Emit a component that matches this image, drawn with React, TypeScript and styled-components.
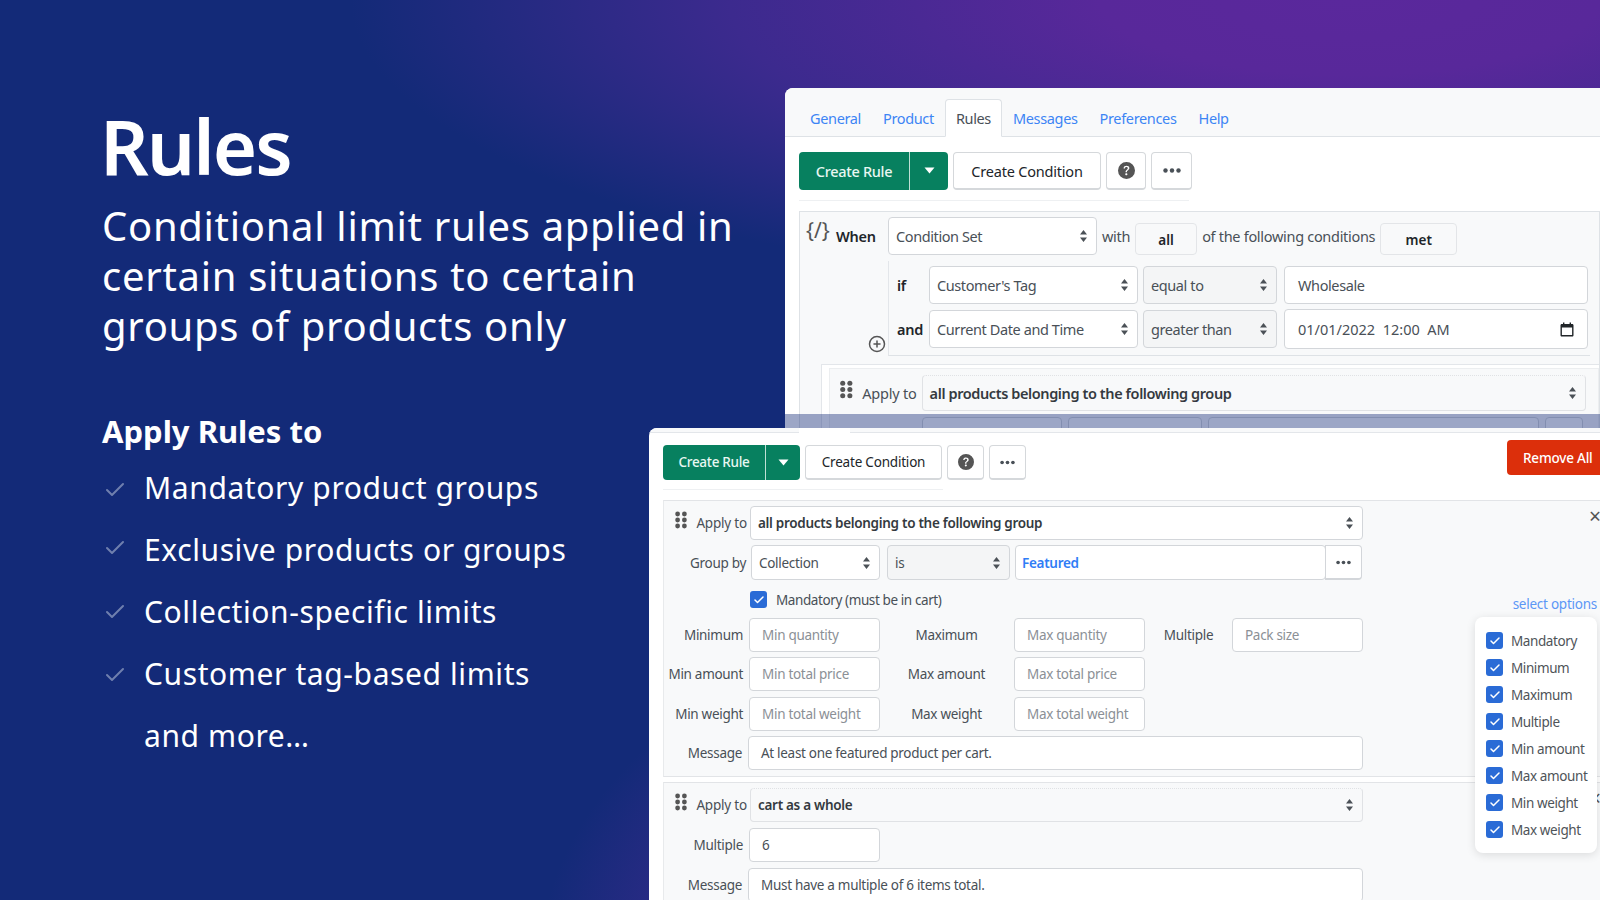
import styled, { createGlobalStyle } from "styled-components";
import { Check, CirclePlus } from "lucide-react";
import { BsQuestionCircleFill } from "react-icons/bs";

const GlobalStyle = createGlobalStyle`
  html, body {
    margin: 0;
    padding: 0;
    width: 1600px;
    height: 900px;
    overflow: hidden;
    background: #132a78;
  }
  * {
    box-sizing: border-box;
  }
`;

const Stage = styled.div`
  position: relative;
  width: 1600px;
  height: 900px;
  overflow: hidden;
  font-family: "Noto Sans", sans-serif;
  background:
    radial-gradient(ellipse 1000px 300px at 1350px 0, #5a289c 0%, #58289a 25%, #3c2a8e 62%, rgba(19, 42, 120, 0) 100%),
    radial-gradient(ellipse 760px 420px at 1300px 960px, #5f2ca3 0%, rgba(95, 44, 163, 0.6) 70%, rgba(19, 42, 120, 0) 100%),
    #132a78;
`;

const Copy = styled.section`
  width: 680px;
  padding: 101px 0 0 102px;
  color: #fff;
`;

const Title = styled.h1`
  margin: 0 0 0 -2px;
  font-size: 76px;
  line-height: 90px;
  font-weight: 600;
  letter-spacing: -2px;
`;

const Lead = styled.p`
  margin: 10px 0 0;
  width: 660px;
  font-size: 40px;
  line-height: 50px;
  font-weight: 400;
  letter-spacing: 0.7px;
`;

const SubTitle = styled.h2`
  margin: 60px 0 0;
  font-size: 31px;
  line-height: 40px;
  font-weight: 700;
  letter-spacing: 0;
`;

const Bullets = styled.ul`
  margin: 5px 0 0;
  padding: 0;
  list-style: none;
`;

const Bullet = styled.li`
  display: flex;
  align-items: center;
  height: 62px;
  font-size: 30px;
  font-weight: 400;
  letter-spacing: 0.6px;
  white-space: nowrap;
`;

const BulletMark = styled.span<{ $nudge?: number }>`
  display: flex;
  width: 42px;
  padding-left: 1px;
  margin-top: ${(p) => p.$nudge ?? 0}px;
  color: #6f7fae;
`;

const Panel = styled.div<{ $x: number; $y: number; $w: number; $h: number }>`
  position: absolute;
  left: ${(p) => p.$x}px;
  top: ${(p) => p.$y}px;
  width: ${(p) => p.$w}px;
  height: ${(p) => p.$h}px;
  background: #fff;
  border-radius: 8px 0 0 0;
  overflow: hidden;
  color: #212529;
`;

const Veil = styled.div`
  position: absolute;
  left: 0;
  right: 0;
  bottom: 0;
  height: 14px;
  background: rgba(19, 42, 120, 0.42);
`;

const TabBar = styled.nav`
  display: flex;
  align-items: flex-end;
  height: 49px;
  padding-left: 14px;
  background: #f8f9fa;
  border-bottom: 1px solid #dee2e6;
`;

const Tab = styled.a<{ $active?: boolean }>`
  height: 38px;
  padding: 0 10px;
  margin-bottom: -1px;
  font-size: 14.5px;
  line-height: 36px;
  letter-spacing: -0.35px;
  color: ${(p) => (p.$active ? "#495057" : "#3d85f5")};
  background: ${(p) => (p.$active ? "#fff" : "transparent")};
  border: 1px solid ${(p) => (p.$active ? "#dee2e6" : "transparent")};
  border-bottom-color: ${(p) => (p.$active ? "#fff" : "transparent")};
  border-radius: 4px 4px 0 0;
`;

const Toolbar = styled.div<{ $pad: string }>`
  display: flex;
  gap: 5px;
  padding: ${(p) => p.$pad};
`;

const SplitButton = styled.div`
  display: flex;
`;

const GreenButton = styled.button<{ $w: number; $h: number; $fs: number; $side: "left" | "right" }>`
  display: flex;
  align-items: center;
  justify-content: center;
  width: ${(p) => p.$w}px;
  height: ${(p) => p.$h}px;
  padding: 0 0 1px;
  border: 0;
  font-family: inherit;
  font-size: ${(p) => p.$fs}px;
  font-weight: 500;
  letter-spacing: -0.3px;
  color: #e9f7f2;
  background: #07805f;
  border-radius: ${(p) => (p.$side === "left" ? "4px 0 0 4px" : "0 4px 4px 0")};
  border-left: ${(p) => (p.$side === "right" ? "1px solid #bfe0d5" : "0")};
`;

const PlainButton = styled.button<{ $w: number; $h: number; $fs: number }>`
  display: flex;
  align-items: center;
  justify-content: center;
  width: ${(p) => p.$w}px;
  height: ${(p) => p.$h}px;
  padding: 0;
  font-family: inherit;
  font-size: ${(p) => p.$fs}px;
  letter-spacing: -0.2px;
  color: #212529;
  background: #fff;
  border: 1px solid #d5d8db;
  border-bottom-width: 2px;
  border-radius: 4px;
`;

const ToolbarRule = styled.div<{ $left: number; $top: number; $w: number }>`
  height: 1px;
  width: ${(p) => p.$w}px;
  margin: ${(p) => p.$top}px 0 0 ${(p) => p.$left}px;
  background: #eef0f2;
`;

const Box = styled.div`
  display: flex;
  align-items: center;
  min-width: 0;
  overflow: hidden;
  white-space: nowrap;
  background: #fff;
  border: 1px solid #d3d6da;
  border-radius: 4px;
`;

const Control = styled(Box)<{ $w?: number; $h: number; $fs: number; $pad?: number; $tone?: "white" | "grey" | "dotted"; $strong?: boolean; $color?: string }>`
  flex: none;
  justify-content: space-between;
  width: ${(p) => (p.$w ? `${p.$w}px` : "100%")};
  height: ${(p) => p.$h}px;
  padding: 0 ${(p) => p.$pad ?? 9}px 0 ${(p) => p.$pad ?? 7}px;
  font-size: ${(p) => p.$fs}px;
  letter-spacing: ${(p) => (p.$fs > 14 ? "-0.4px" : "-0.3px")};
  font-weight: ${(p) => (p.$strong ? 600 : 400)};
  color: ${(p) => p.$color ?? "#495057"};
  background: ${(p) => (p.$tone === "grey" ? "#f4f5f6" : p.$tone === "dotted" ? "#f8f9fa" : "#fff")};
  border-style: ${(p) => (p.$tone === "dotted" ? "dotted solid solid" : "solid")};
  border-color: ${(p) => (p.$tone === "dotted" ? "#e0e2e5" : "#d3d6da")};
`;

const DateText = styled.span`
  letter-spacing: 0;
`;

const RuleBox = styled.div`
  margin: 10px 0 0 14px;
  background: #f8f9fa;
  border: 1px solid #dee2e6;
  padding: 5px 0 0 6px;
  height: 300px;
`;

const WhenRow = styled.div`
  display: flex;
  align-items: flex-end;
  gap: 5px;
`;

const Braces = styled.span`
  width: 25px;
  align-self: flex-start;
  font-size: 21px;
  line-height: 26px;
  font-weight: 400;
  color: #555;
  white-space: nowrap;
`;

const StrongLabel = styled.span<{ $w?: number }>`
  flex: none;
  width: ${(p) => (p.$w ? `${p.$w}px` : "auto")};
  font-size: 14.5px;
  font-weight: 600;
  letter-spacing: -0.3px;
  color: #212529;
`;

const WhenLabel = styled(StrongLabel)`
  width: 47px;
  align-self: center;
`;

const InlineText = styled.span`
  align-self: center;
  font-size: 14.5px;
  letter-spacing: -0.3px;
  color: #495057;
  white-space: nowrap;
`;

const Pill = styled.div<{ $w: number }>`
  display: flex;
  align-items: center;
  justify-content: center;
  width: ${(p) => p.$w}px;
  height: 32px;
  padding-top: 1px;
  font-size: 13.5px;
  font-weight: 600;
  color: #212529;
  background: #f8f9fa;
  border: 1px solid #e3e5e8;
  border-radius: 4px;
`;

const ConditionBox = styled.div`
  position: relative;
  display: grid;
  grid-template-columns: 32px 209px 139px 311px;
  grid-auto-rows: 38px;
  row-gap: 6px;
  width: 702px;
  margin: 6px 0 0 82px;
  padding: 5px 0 7px 8px;
  border-left: 1px solid #e3e6ea;
  border-bottom: 1px solid #dee2e6;
  align-items: center;
`;

const AddCondition = styled.span`
  position: absolute;
  left: -21px;
  bottom: 2px;
  display: flex;
  color: #555;
`;

const WithGap = styled.div<{ $left: number }>`
  padding-left: ${(p) => p.$left}px;
`;

const OuterGroup = styled.div`
  margin: 8px 0 0 15px;
  padding: 3px 0 0 7px;
  background: #fff;
  border: 1px solid #e3e6ea;
  border-right: 0;
  height: 100px;
`;

const InnerGroup = styled.div`
  padding: 6px 0 0 10px;
  background: #f8f9fa;
  border: 1px solid #eceef0;
  height: 90px;
`;

const ApplyBack = styled.div`
  display: flex;
  align-items: flex-start;
`;

const Grip = styled.svg`
  flex: none;
  display: block;
  margin-top: 5px;
  fill: #555;
`;

const ApplyLabel = styled.span<{ $w: number; $fs: number; $lh: number }>`
  flex: none;
  width: ${(p) => p.$w}px;
  text-align: right;
  font-size: ${(p) => p.$fs}px;
  line-height: ${(p) => p.$lh}px;
  letter-spacing: -0.2px;
  color: #495057;
  white-space: nowrap;
`;

const BackSecondRow = styled.div`
  display: grid;
  grid-template-columns: 140px 134px 331px 38px;
  gap: 0 6px;
  margin: 6px 0 0 82px;
`;

const ClippedControl = styled.div`
  height: 38px;
  background: #fff;
  border: 1px solid #d3d6da;
  border-radius: 4px;
`;

const FrontStrip = styled.div`
  height: 5px;
  padding-left: 150px;
  background: #f8f9fa;
  border-bottom: 1px solid #e3e6ea;
`;

const FrontTabEnd = styled.div`
  width: 51px;
  height: 5px;
  background: #fff;
`;

const FrontToolbar = styled.div`
  display: flex;
  justify-content: space-between;
`;

const RemoveAll = styled.button`
  flex: none;
  width: 105px;
  height: 35px;
  margin: 7px -12px 0 0;
  padding: 0 0 0 16px;
  text-align: left;
  font-family: inherit;
  font-size: 13.5px;
  font-weight: 500;
  letter-spacing: -0.2px;
  color: #fff;
  background: #dc2f0b;
  border: 0;
  border-radius: 4px 0 0 4px;
`;

const Group = styled.div<{ $top: number; $h: number }>`
  display: flex;
  justify-content: space-between;
  height: ${(p) => p.$h}px;
  margin: ${(p) => p.$top}px 0 0 14px;
  background: #f8f9fa;
  border-top: 1px solid #e2e4e7;
  border-left: 1px solid #e8eaec;
  border-bottom: 1px solid #e2e4e7;
`;

const Form = styled.div`
  flex: none;
  width: 699px;
  padding-top: 5px;
`;

const Side = styled.div`
  display: flex;
  flex-direction: column;
  align-items: flex-end;
  margin-right: -1px;
  font-size: 14px;
`;

const CloseMark = styled.span<{ $top: number }>`
  margin: ${(p) => p.$top}px 0 0;
  font-size: 21px;
  line-height: 17px;
  color: #555;
`;

const SelectOptions = styled.a`
  margin: 70px 4px 0 0;
  font-size: 13.5px;
  letter-spacing: -0.25px;
  color: #5c97f6;
`;

const Row = styled.div<{ $top?: number; $label: number; $gap: number }>`
  display: grid;
  grid-template-columns: ${(p) => p.$label}px 1fr;
  column-gap: ${(p) => p.$gap}px;
  align-items: center;
  margin-top: ${(p) => p.$top ?? 0}px;
`;

const ApplyRow = styled.div<{ $top?: number }>`
  display: flex;
  align-items: flex-start;
  margin-top: ${(p) => p.$top ?? 0}px;
  padding-left: 11px;
`;

const FieldLabel = styled.span<{ $center?: boolean }>`
  font-size: 13.5px;
  letter-spacing: -0.3px;
  color: #495057;
  text-align: ${(p) => (p.$center ? "center" : "right")};
  white-space: nowrap;
`;

const GroupByFields = styled.div`
  display: grid;
  grid-template-columns: 129px 123px 1fr;
  column-gap: 7px;
`;

const FeaturedField = styled.div`
  display: flex;
  margin-left: -2px;
`;

const DotsAddon = styled.div`
  flex: none;
  display: flex;
  align-items: center;
  justify-content: center;
  width: 37px;
  height: 35px;
  margin-left: -1px;
  background: #fff;
  border: 1px solid #d3d6da;
  border-bottom-width: 2px;
  border-radius: 0 4px 4px 0;
`;

const MandatoryRow = styled.label`
  display: flex;
  align-items: center;
  gap: 9px;
  height: 38px;
  padding: 2px 0 1px 86px;
  font-size: 13.5px;
  letter-spacing: -0.4px;
  color: #495057;
`;

const Tick = styled.span`
  flex: none;
  display: flex;
  align-items: center;
  justify-content: center;
  width: 17px;
  height: 17px;
  color: #fff;
  background: #2a6bd6;
  border-radius: 3px;
`;

const LimitsRow = styled.div<{ $top?: number }>`
  display: grid;
  grid-template-columns: 79px 136px 135px 131px 87px 131px;
  align-items: center;
  margin-top: ${(p) => p.$top ?? 0}px;
`;

const LimitField = styled.div`
  margin-left: 6px;
  width: 131px;
`;

const OptionsPopup = styled.div`
  position: absolute;
  left: 826px;
  top: 189px;
  width: 122px;
  height: 236px;
  padding: 10px 0 0 11px;
  background: #fff;
  border-radius: 8px;
  box-shadow: 0 2px 10px rgba(0, 0, 0, 0.12);
`;

const OptionRow = styled.div`
  display: flex;
  align-items: center;
  gap: 8px;
  height: 27px;
  font-size: 13.5px;
  letter-spacing: -0.4px;
  color: #4f5459;
  white-space: nowrap;
`;

const Arrows = () => (
  <svg width="7" height="14" viewBox="0 0 7 14" style={{ flex: "none" }}>
    <path d="M3.5 1 L7 5.6 H0 Z M3.5 13 L0 8.4 H7 Z" fill="#4b5157" />
  </svg>
);

const Caret = () => (
  <svg width="11" height="7" viewBox="0 0 11 7">
    <path d="M0.5 0.5 H10.5 L5.5 6.5 Z" fill="#fff" />
  </svg>
);

const Dots = ({ width = 18 }: { width?: number }) => (
  <svg width={width} height="5" viewBox="0 0 18 5">
    <circle cx="2.5" cy="2.5" r="2.2" fill="#495057" />
    <circle cx="9" cy="2.5" r="2.2" fill="#495057" />
    <circle cx="15.5" cy="2.5" r="2.2" fill="#495057" />
  </svg>
);

const GripIcon = ({ scale = 1 }: { scale?: number }) => (
  <Grip width={12 * scale} height={18 * scale} viewBox="0 0 12 18">
    {[3, 9, 15].map((y) => (
      <g key={y}>
        <circle cx="2.6" cy={y} r="2.4" />
        <circle cx="9.4" cy={y} r="2.4" />
      </g>
    ))}
  </Grip>
);

const CalendarIcon = () => (
  <svg width="14" height="15" viewBox="0 0 14 15">
    <path
      d="M3 0.5V2H1.8C1 2 0.5 2.6 0.5 3.3V13.2C0.5 14 1 14.5 1.8 14.5H12.2C13 14.5 13.5 14 13.5 13.2V3.3C13.5 2.6 13 2 12.2 2H11V0.5H9.6V2H4.4V0.5ZM1.9 5.5H12.1V13.1H1.9Z"
      fill="#212529"
      fillRule="evenodd"
    />
  </svg>
);

const limits = [
  { top: 0, a: "Minimum", ap: "Min quantity", b: "Maximum", bp: "Max quantity", c: "Multiple", cp: "Pack size" },
  { top: 5, a: "Min amount", ap: "Min total price", b: "Max amount", bp: "Max total price" },
  { top: 6, a: "Min weight", ap: "Min total weight", b: "Max weight", bp: "Max total weight" },
];

const options = ["Mandatory", "Minimum", "Maximum", "Multiple", "Min amount", "Max amount", "Min weight", "Max weight"];

const bullets = [
  { text: "Mandatory product groups", nudge: 6 },
  { text: "Exclusive products or groups", nudge: -2 },
  { text: "Collection-specific limits", nudge: 2 },
  { text: "Customer tag-based limits", nudge: 3 },
];

const tabs = ["General", "Product", "Rules", "Messages", "Preferences", "Help"];

const BackPanel = () => (
  <Panel $x={785} $y={88} $w={815} $h={340}>
    <TabBar>
      {tabs.map((t) => (
        <Tab key={t} $active={t === "Rules"}>
          {t}
        </Tab>
      ))}
    </TabBar>
    <Toolbar $pad="15px 14px 0">
      <SplitButton>
        <GreenButton $w={110} $h={38} $fs={14.5} $side="left">Create Rule</GreenButton>
        <GreenButton $w={39} $h={38} $fs={14.5} $side="right"><Caret /></GreenButton>
      </SplitButton>
      <PlainButton $w={148} $h={38} $fs={14.5}>Create Condition</PlainButton>
      <PlainButton $w={40} $h={38} $fs={14.5}><BsQuestionCircleFill size={17} color="#555" /></PlainButton>
      <PlainButton $w={41} $h={38} $fs={14.5}><Dots /></PlainButton>
    </Toolbar>
    <ToolbarRule $left={14} $top={10} $w={390} />
    <RuleBox>
      <WhenRow>
        <Braces>{"{/}"}</Braces>
        <WhenLabel>When</WhenLabel>
        <Control $w={209} $h={38} $fs={14.5}>Condition Set<Arrows /></Control>
        <InlineText>with</InlineText>
        <Pill $w={62}>all</Pill>
        <InlineText>of the following conditions</InlineText>
        <Pill $w={77}>met</Pill>
      </WhenRow>
      <ConditionBox>
        <AddCondition><CirclePlus size={18} strokeWidth={2} /></AddCondition>
        <StrongLabel>if</StrongLabel>
        <Control $w={209} $h={38} $fs={14.5}>Customer's Tag<Arrows /></Control>
        <WithGap $left={5}><Control $w={134} $h={38} $fs={14.5} $tone="grey">equal to<Arrows /></Control></WithGap>
        <WithGap $left={7}><Control $w={304} $h={38} $fs={14.5} $pad={13}>Wholesale</Control></WithGap>
        <StrongLabel>and</StrongLabel>
        <Control $w={209} $h={38} $fs={14.5}>Current Date and Time<Arrows /></Control>
        <WithGap $left={5}><Control $w={134} $h={38} $fs={14.5} $tone="grey">greater than<Arrows /></Control></WithGap>
        <WithGap $left={7}><Control $w={304} $h={40} $fs={14.5} $pad={13}><DateText>01/01/2022&nbsp; 12:00&nbsp; AM</DateText><CalendarIcon /></Control></WithGap>
      </ConditionBox>
      <OuterGroup>
        <InnerGroup>
          <ApplyBack>
            <GripIcon scale={1.05} />
            <ApplyLabel $w={64} $fs={14.5} $lh={36}>Apply to</ApplyLabel>
            <WithGap $left={5}>
              <Control $w={664} $h={36} $fs={14.5} $tone="dotted" $strong $color="#343a40">
                all products belonging to the following group<Arrows />
              </Control>
            </WithGap>
          </ApplyBack>
          <BackSecondRow>
            <ClippedControl />
            <ClippedControl />
            <ClippedControl />
            <ClippedControl />
          </BackSecondRow>
        </InnerGroup>
      </OuterGroup>
    </RuleBox>
    <Veil />
  </Panel>
);

const FrontPanel = () => (
  <Panel $x={649} $y={428} $w={951} $h={472}>
    <FrontStrip><FrontTabEnd /></FrontStrip>
    <FrontToolbar>
      <Toolbar $pad="12px 0 0 14px">
        <SplitButton>
          <GreenButton $w={102} $h={35} $fs={13.5} $side="left">Create Rule</GreenButton>
          <GreenButton $w={35} $h={35} $fs={13.5} $side="right"><Caret /></GreenButton>
        </SplitButton>
        <PlainButton $w={137} $h={35} $fs={13.5}>Create Condition</PlainButton>
        <PlainButton $w={37} $h={35} $fs={13.5}><BsQuestionCircleFill size={16} color="#555" /></PlainButton>
        <PlainButton $w={37} $h={35} $fs={13.5}><Dots width={15} /></PlainButton>
      </Toolbar>
      <RemoveAll>Remove All</RemoveAll>
    </FrontToolbar>
    <ToolbarRule $left={14} $top={9} $w={280} />
    <Group $top={10} $h={277}>
      <Form>
        <ApplyRow>
          <GripIcon />
          <ApplyLabel $w={60} $fs={13.5} $lh={34}>Apply to</ApplyLabel>
          <WithGap $left={3}>
            <Control $w={613} $h={34} $fs={13.5} $strong $color="#343a40">
              all products belonging to the following group<Arrows />
            </Control>
          </WithGap>
        </ApplyRow>
        <Row $top={5} $label={82} $gap={5}>
          <FieldLabel>Group by</FieldLabel>
          <GroupByFields>
            <Control $w={129} $h={35} $fs={13.5}>Collection<Arrows /></Control>
            <Control $w={123} $h={35} $fs={13.5} $tone="grey">is<Arrows /></Control>
            <FeaturedField>
              <Control $w={311} $h={35} $fs={13.5} $pad={6} $strong $color="#2f7df6">Featured</Control>
              <DotsAddon><Dots width={15} /></DotsAddon>
            </FeaturedField>
          </GroupByFields>
        </Row>
        <MandatoryRow>
          <Tick><Check size={12} strokeWidth={3} /></Tick>
          Mandatory (must be in cart)
        </MandatoryRow>
        {limits.map((r) => (
          <LimitsRow key={r.a} $top={r.top}>
            <FieldLabel>{r.a}</FieldLabel>
            <LimitField>
              <Control $w={131} $h={34} $fs={13.5} $pad={12} $color="#8b9096">{r.ap}</Control>
            </LimitField>
            <FieldLabel $center>{r.b}</FieldLabel>
            <Control $w={131} $h={34} $fs={13.5} $pad={12} $color="#8b9096">{r.bp}</Control>
            {r.c ? <FieldLabel $center>{r.c}</FieldLabel> : <span />}
            {r.cp ? <Control $w={131} $h={34} $fs={13.5} $pad={12} $color="#8b9096">{r.cp}</Control> : <span />}
          </LimitsRow>
        ))}
        <Row $top={5} $label={78} $gap={6}>
          <FieldLabel>Message</FieldLabel>
          <Control $w={615} $h={34} $fs={13.5} $pad={12}>At least one featured product per cart.</Control>
        </Row>
      </Form>
      <Side>
        <CloseMark $top={7}>×</CloseMark>
        <SelectOptions>select options</SelectOptions>
      </Side>
    </Group>
    <Group $top={5} $h={130}>
      <Form>
        <ApplyRow>
          <GripIcon />
          <ApplyLabel $w={60} $fs={13.5} $lh={34}>Apply to</ApplyLabel>
          <WithGap $left={3}>
            <Control $w={613} $h={34} $fs={13.5} $tone="dotted" $strong $color="#343a40">
              cart as a whole<Arrows />
            </Control>
          </WithGap>
        </ApplyRow>
        <Row $top={6} $label={79} $gap={6}>
          <FieldLabel>Multiple</FieldLabel>
          <Control $w={131} $h={34} $fs={13.5} $pad={12}>6</Control>
        </Row>
        <Row $top={6} $label={78} $gap={6}>
          <FieldLabel>Message</FieldLabel>
          <Control $w={615} $h={34} $fs={13.5} $pad={12}>Must have a multiple of 6 items total.</Control>
        </Row>
      </Form>
      <Side>
        <CloseMark $top={7}>×</CloseMark>
      </Side>
    </Group>
    <OptionsPopup>
      {options.map((o) => (
        <OptionRow key={o}>
          <Tick><Check size={12} strokeWidth={3} /></Tick>
          {o}
        </OptionRow>
      ))}
    </OptionsPopup>
  </Panel>
);

const App = () => (
  <Stage>
    <GlobalStyle />
    <Copy>
      <Title>Rules</Title>
      <Lead>Conditional limit rules applied in certain situations to certain groups of products only</Lead>
      <SubTitle>Apply Rules to</SubTitle>
      <Bullets>
        {bullets.map((b) => (
          <Bullet key={b.text}>
            <BulletMark $nudge={b.nudge}><Check size={24} strokeWidth={2} /></BulletMark>
            {b.text}
          </Bullet>
        ))}
        <Bullet>
          <BulletMark />
          and more…
        </Bullet>
      </Bullets>
    </Copy>
    <BackPanel />
    <FrontPanel />
  </Stage>
);

export default App;
